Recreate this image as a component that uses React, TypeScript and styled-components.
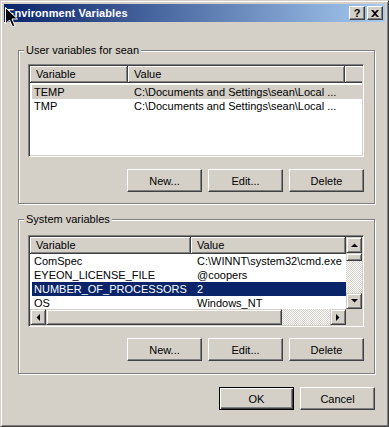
import React from "react";
import styled, { createGlobalStyle, css } from "styled-components";

const GlobalStyle = createGlobalStyle`
  html, body {
    margin: 0;
    padding: 0;
    background: #d4d0c8;
  }
  body {
    font-family: "Liberation Sans", Arial, sans-serif;
    font-size: 11px;
    color: #000;
  }
`;

const Window = styled.div`
  position: relative;
  width: 389px;
  height: 427px;
  box-sizing: border-box;
  background: #d4d0c8;
  border: 1px solid;
  border-color: #d4d0c8 #404040 #404040 #d4d0c8;
  box-shadow: inset 1px 1px #fff, inset -1px -1px #808080;
  padding: 3px;
  display: flex;
  flex-direction: column;
`;

const TitleBar = styled.div`
  height: 18px;
  flex: 0 0 18px;
  background: linear-gradient(to right, #0a246a, #a6caf0);
  display: flex;
  align-items: center;
  padding: 0 2px 0 3px;
  gap: 2px;
`;

const Title = styled.div`
  flex: 1;
  color: #fff;
  font-weight: bold;
  font-size: 11px;
  letter-spacing: 0.1px;
`;

const TitleButton = styled.div`
  width: 16px;
  height: 14px;
  box-sizing: border-box;
  background: #d4d0c8;
  border: 1px solid;
  border-color: #fff #404040 #404040 #fff;
  box-shadow: inset -1px -1px #808080;
  display: flex;
  align-items: center;
  justify-content: center;
  font-weight: bold;
  font-size: 11px;
  line-height: 12px;
`;

const Body = styled.div`
  flex: 1;
  display: flex;
  flex-direction: column;
  padding: 0 10px 0 14px;
`;

const Group = styled.fieldset<{ $top: number; $padTop: number; $padBottom: number; $gap: number }>`
  margin: ${(p) => p.$top}px 0 0 0;
  padding: ${(p) => p.$padTop}px 10px ${(p) => p.$padBottom}px 9px;
  border: 1px solid #808080;
  box-shadow: inset 1px 1px #fff, 1px 1px #fff;
  min-width: 0;
  display: flex;
  flex-direction: column;
  gap: ${(p) => p.$gap}px;
`;

const Legend = styled.legend`
  margin-left: -4px;
  padding: 0 2px;
  background: #d4d0c8;
  line-height: 13px;
  font-size: 11px;
`;

const ListView = styled.div<{ $h: number }>`
  height: ${(p) => p.$h}px;
  box-sizing: border-box;
  border: 1px solid;
  border-color: #808080 #fff #fff #808080;
  box-shadow: inset 1px 1px #404040, inset -1px -1px #d4d0c8;
  background: #fff;
  padding: 1px;
  overflow: hidden;
`;

const ScrollGrid = styled.div`
  height: 100%;
  display: grid;
  grid-template-columns: 1fr 16px;
  grid-template-rows: 1fr 16px;
`;

const Pane = styled.div`
  overflow: hidden;
  min-width: 0;
`;

const Header = styled.div`
  display: flex;
  height: 17px;
`;

const HeaderCell = styled.div<{ $w?: number }>`
  flex: 0 0 ${(p) => p.$w}px;
  height: 17px;
  box-sizing: border-box;
  background: #d4d0c8;
  border-right: 1px solid #404040;
  border-bottom: 1px solid #404040;
  box-shadow: inset 1px 1px #fff, inset -1px -1px #808080;
  padding-left: 6px;
  line-height: 16px;
  white-space: nowrap;
  overflow: hidden;
`;

const HeaderFiller = styled.div`
  flex: 1 1 auto;
  height: 17px;
  box-sizing: border-box;
  background: #d4d0c8;
  border-bottom: 1px solid #404040;
  box-shadow: inset 1px 1px #fff, inset 0 -1px #808080;
`;

const Rows = styled.div<{ $padTop: number }>`
  padding-top: ${(p) => p.$padTop}px;
`;

const Row = styled.div<{ $cols: string; $sel?: "focus" | "idle" }>`
  display: grid;
  grid-template-columns: ${(p) => p.$cols};
  height: 14px;
  line-height: 14px;
  margin-left: 2px;
  white-space: nowrap;
  ${(p) =>
    p.$sel === "focus" &&
    css`
      background: #0a246a;
      color: #fff;
    `}
  ${(p) =>
    p.$sel === "idle" &&
    css`
      background: #d4d0c8;
    `}
`;

const Cell = styled.div<{ $pad: number }>`
  padding-left: ${(p) => p.$pad}px;
  overflow: hidden;
`;

const raised = css`
  box-sizing: border-box;
  background: #d4d0c8;
  border: 1px solid;
  border-color: #d4d0c8 #404040 #404040 #d4d0c8;
  box-shadow: inset 1px 1px #fff, inset -1px -1px #808080;
`;

const ArrowButton = styled.div`
  ${raised};
  width: 16px;
  height: 16px;
  flex: 0 0 16px;
  display: flex;
  align-items: center;
  justify-content: center;
`;

const Thumb = styled.div<{ $size: number }>`
  ${raised};
  flex: 0 0 ${(p) => p.$size}px;
`;

const Track = styled.div`
  flex: 1;
  background: repeating-conic-gradient(#d4d0c8 0% 25%, #fff 0% 50%) 0 0 / 2px 2px;
`;

const ScrollBar = styled.div<{ $vertical?: boolean }>`
  display: flex;
  flex-direction: ${(p) => (p.$vertical ? "column" : "row")};
`;

const Corner = styled.div`
  background: #d4d0c8;
`;

const ButtonRow = styled.div`
  display: flex;
  justify-content: flex-end;
  gap: 6px;
`;

const Button = styled.div<{ $default?: boolean }>`
  width: 75px;
  height: 23px;
  box-sizing: border-box;
  background: #d4d0c8;
  border: 1px solid;
  border-color: #fff #404040 #404040 #fff;
  box-shadow: inset -1px -1px #808080;
  display: flex;
  align-items: center;
  justify-content: center;
  font-size: 11px;
  ${(p) =>
    p.$default &&
    css`
      border-color: #000;
      box-shadow: inset 1px 1px #fff, inset -1px -1px #404040, inset -2px -2px #808080;
    `}
`;

const DialogButtons = styled(ButtonRow)`
  margin-top: 13px;
`;

const Pointer = styled.svg`
  position: absolute;
  left: 4px;
  top: 6px;
`;

type Dir = "up" | "down" | "left" | "right";

const Arrow = ({ dir }: { dir: Dir }) => {
  const pts: Record<Dir, string> = {
    up: "0,4 7,4 3.5,0.5",
    down: "0,0 7,0 3.5,3.5",
    left: "4,0 4,7 0.5,3.5",
    right: "0,0 0,7 3.5,3.5",
  };
  const vertical = dir === "up" || dir === "down";
  return (
    <svg width={vertical ? 7 : 4} height={vertical ? 4 : 7}>
      <polygon points={pts[dir]} fill="#000" />
    </svg>
  );
};

const userVars = [
  { name: "TEMP", value: "C:\\Documents and Settings\\sean\\Local ...", sel: "idle" as const },
  { name: "TMP", value: "C:\\Documents and Settings\\sean\\Local ..." },
];

const systemVars = [
  { name: "ComSpec", value: "C:\\WINNT\\system32\\cmd.exe" },
  { name: "EYEON_LICENSE_FILE", value: "@coopers" },
  { name: "NUMBER_OF_PROCESSORS", value: "2", sel: "focus" as const },
  { name: "OS", value: "Windows_NT" },
];

const Actions = () => (
  <ButtonRow>
    <Button>New...</Button>
    <Button>Edit...</Button>
    <Button>Delete</Button>
  </ButtonRow>
);

export default function App() {
  return (
    <>
      <GlobalStyle />
      <Window>
        <TitleBar>
          <Title>Environment Variables</Title>
          <TitleButton>?</TitleButton>
          <TitleButton>
            <svg width="8" height="7" viewBox="0 0 8 7">
              <path d="M0 0h2l2 2 2-2h2L5 3.5 8 7H6L4 5 2 7H0l3-3.5z" fill="#000" />
            </svg>
          </TitleButton>
        </TitleBar>

        <Body>
          <Group $top={22} $padTop={7} $padBottom={11} $gap={12}>
            <Legend>User variables for sean</Legend>
            <ListView $h={93}>
              <Header>
                <HeaderCell $w={98}>Variable</HeaderCell>
                <HeaderCell $w={217}>Value</HeaderCell>
                <HeaderFiller />
              </Header>
              <Rows $padTop={2}>
                {userVars.map((v) => (
                  <Row key={v.name} $cols="96px 217px" $sel={v.sel}>
                    <Cell $pad={2}>{v.name}</Cell>
                    <Cell $pad={6}>{v.value}</Cell>
                  </Row>
                ))}
              </Rows>
            </ListView>
            <Actions />
          </Group>

          <Group $top={9} $padTop={9} $padBottom={12} $gap={11}>
            <Legend>System variables</Legend>
            <ListView $h={92}>
              <ScrollGrid>
                <Pane>
                  <Header>
                    <HeaderCell $w={161}>Variable</HeaderCell>
                    <HeaderCell $w={155}>Value</HeaderCell>
                  </Header>
                  <Rows $padTop={0}>
                    {systemVars.map((v) => (
                      <Row key={v.name} $cols="159px 1fr" $sel={v.sel}>
                        <Cell $pad={2}>{v.name}</Cell>
                        <Cell $pad={6}>{v.value}</Cell>
                      </Row>
                    ))}
                  </Rows>
                </Pane>
                <ScrollBar $vertical>
                  <ArrowButton>
                    <Arrow dir="up" />
                  </ArrowButton>
                  <Thumb $size={8} />
                  <Track />
                  <ArrowButton>
                    <Arrow dir="down" />
                  </ArrowButton>
                </ScrollBar>
                <ScrollBar>
                  <ArrowButton>
                    <Arrow dir="left" />
                  </ArrowButton>
                  <Thumb $size={236} />
                  <Track />
                  <ArrowButton>
                    <Arrow dir="right" />
                  </ArrowButton>
                </ScrollBar>
                <Corner />
              </ScrollGrid>
            </ListView>
            <Actions />
          </Group>

          <DialogButtons>
            <Button $default>OK</Button>
            <Button>Cancel</Button>
          </DialogButtons>
        </Body>

        <Pointer width="13" height="21" viewBox="0 0 13 21">
          <path
            d="M0.5 0.5 V17 L4.5 13 L7.5 20 L10 19 L7 12 H12.5 Z"
            fill="#000"
            stroke="#fff"
            strokeWidth="1"
          />
        </Pointer>
      </Window>
    </>
  );
}
